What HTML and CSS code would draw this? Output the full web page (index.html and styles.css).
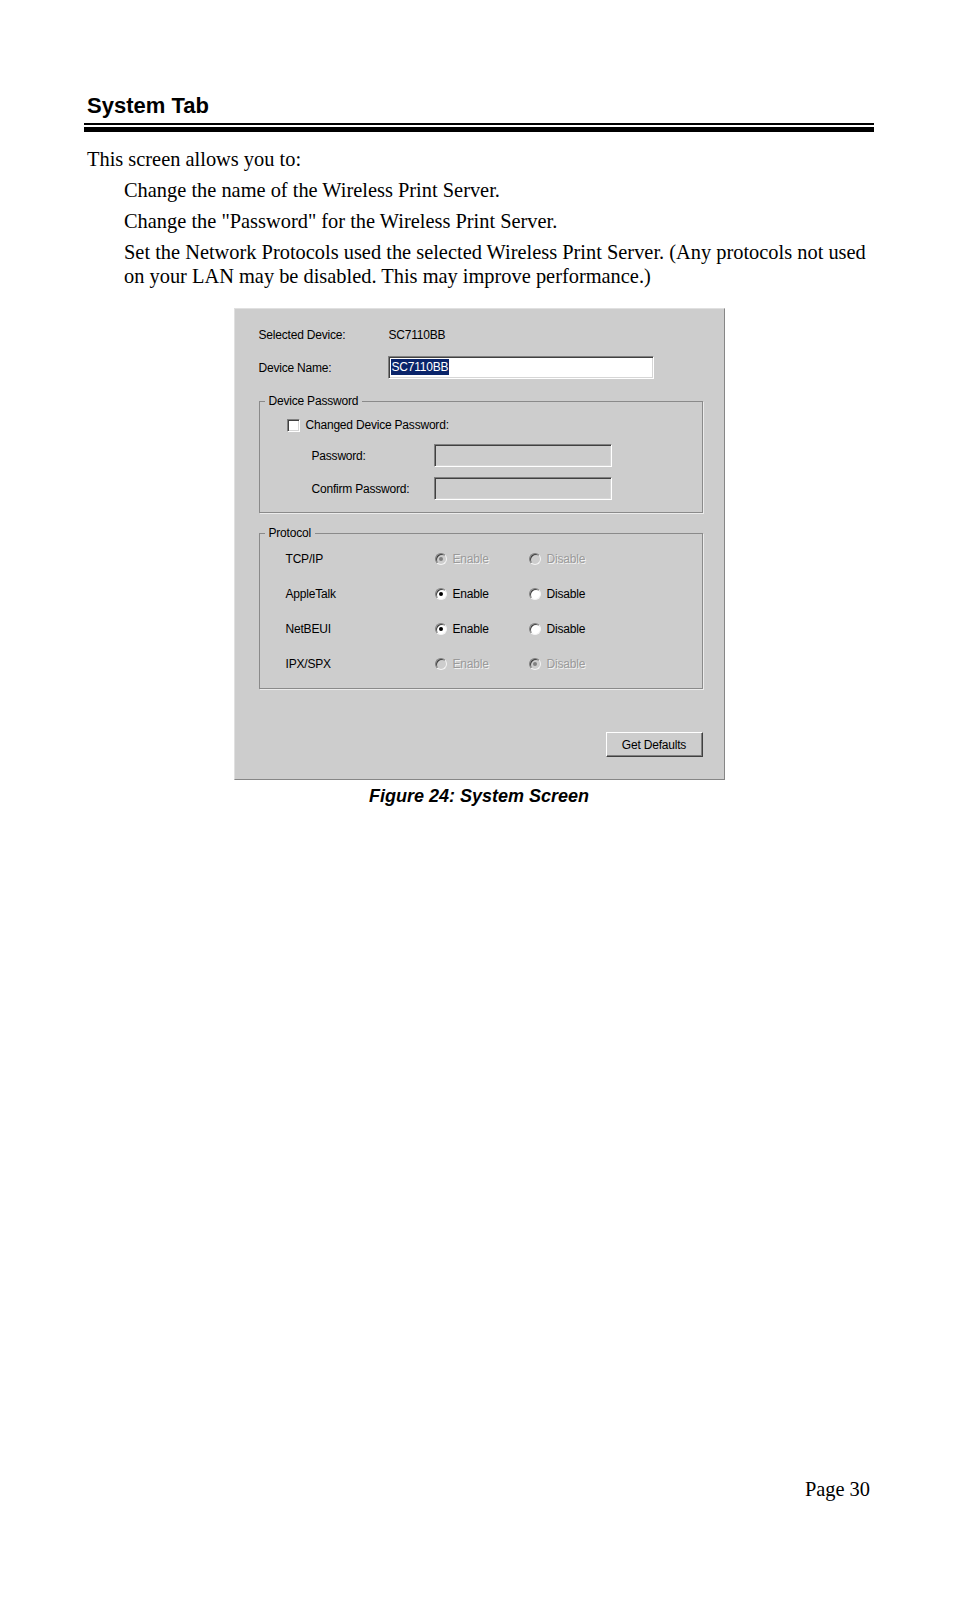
FILE: index.html
```html
<!DOCTYPE html>
<html lang="en">
<head>
<meta charset="utf-8">
<title>System Tab</title>
<link rel="stylesheet" href="styles.css">
</head>
<body>
<div class="page">
  <h1 class="title">System Tab</h1>
  <div class="rule"></div>
  <p class="intro">This screen allows you to:</p>
  <ul class="items">
    <li>Change the name of the Wireless Print Server.</li>
    <li>Change the "Password" for the Wireless Print Server.</li>
    <li>Set the Network Protocols used the selected Wireless Print Server. (Any protocols not used on your LAN may be disabled. This may improve performance.)</li>
  </ul>

  <div class="dialog">
    <div class="row r-selected"><span>Selected Device:</span><span>SC7110BB</span></div>
    <div class="row r-name"><span>Device Name:</span><div class="textbox"><span class="sel">SC7110BB</span></div></div>

    <fieldset class="group g-pass">
      <legend>Device Password</legend>
      <div class="check-row"><span class="checkbox"></span><span>Changed Device Password:</span></div>
      <div class="pw-row first"><span>Password:</span><div class="textbox disabled"></div></div>
      <div class="pw-row"><span>Confirm Password:</span><div class="textbox disabled"></div></div>
    </fieldset>

    <fieldset class="group g-proto">
      <legend>Protocol</legend>
      <div class="proto-row">
        <span>TCP/IP</span>
        <span class="opt off"><span class="radio on"></span>Enable</span>
        <span class="opt off"><span class="radio"></span>Disable</span>
      </div>
      <div class="proto-row">
        <span>AppleTalk</span>
        <span class="opt"><span class="radio on"></span>Enable</span>
        <span class="opt"><span class="radio"></span>Disable</span>
      </div>
      <div class="proto-row">
        <span>NetBEUI</span>
        <span class="opt"><span class="radio on"></span>Enable</span>
        <span class="opt"><span class="radio"></span>Disable</span>
      </div>
      <div class="proto-row">
        <span>IPX/SPX</span>
        <span class="opt off"><span class="radio"></span>Enable</span>
        <span class="opt off"><span class="radio on"></span>Disable</span>
      </div>
    </fieldset>

    <div class="actions"><button class="btn" type="button">Get Defaults</button></div>
  </div>

  <p class="caption">Figure 24: System Screen</p>
  <footer class="pagenum">Page 30</footer>
</div>
</body>
</html>
```

FILE: styles.css
```css
html, body {
  margin: 0;
  padding: 0;
  background: #fff;
}

body {
  font-family: "Liberation Serif", "Times New Roman", serif;
  color: #000;
}

.page {
  box-sizing: border-box;
  height: 1610px;
  padding: 93px 80px 0 84px;
  display: flex;
  flex-direction: column;
}

.title {
  margin: 0;
  padding-left: 3px;
  font: bold 22px/26px "Liberation Sans", Arial, sans-serif;
}

.rule {
  margin-top: 4px;
  height: 2px;
  border-top: 2px solid #000;
  border-bottom: 5px solid #000;
}

.intro {
  margin: 15px 0 0 3px;
  font-size: 20.4px;
  line-height: 24px;
}

.items {
  list-style: none;
  margin: 7px 0 0;
  padding: 0 0 0 40px;
  font-size: 20.4px;
  line-height: 24px;
}

.items li + li {
  margin-top: 7px;
}

/* ---------- dialog ---------- */
.dialog {
  box-sizing: border-box;
  width: 491px;
  height: 472px;
  margin: 20px auto 0;
  padding: 18px 21px 0 24px;
  background: #cdcdcd;
  border: 1px solid;
  border-color: #e0e0e0 #868686 #868686 #e0e0e0;
  font: 12px/14px "Liberation Sans", Arial, sans-serif;
  letter-spacing: -0.2px;
  color: #000;
}

.row {
  display: grid;
  grid-template-columns: 130px auto;
  align-items: center;
}

.r-selected {
  line-height: 16px;
}

.r-name {
  margin-top: 13px;
  grid-template-columns: 129px 266px;
}

.textbox {
  box-sizing: border-box;
  height: 23px;
  padding: 2px 0 0 1px;
  background: #fff;
  border: 1px solid;
  border-color: #808080 #fff #fff #808080;
  box-shadow: inset 1px 1px 0 #404040, inset -1px -1px 0 #d6d6d6;
}

.textbox.disabled {
  background: #cdcdcd;
}

.sel {
  display: inline-block;
  margin-left: 1px;
  padding: 0 1px;
  line-height: 16px;
  background: #0a246a;
  color: #fff;
}

.group {
  box-sizing: border-box;
  width: 444px;
  min-width: 0;
  margin: 15px 0 0;
  padding: 10px 0 12px 5px;
  border: 1px solid #8a8a8a;
  box-shadow: 1px 1px 0 #ececec;
}

.group legend {
  padding: 0 4px;
  line-height: 14px;
}

.check-row {
  display: flex;
  align-items: center;
  gap: 6px;
  margin-left: 22px;
  height: 14px;
}

.checkbox {
  box-sizing: border-box;
  width: 13px;
  height: 13px;
  background: #fff;
  border: 1px solid;
  border-color: #808080 #fff #fff #808080;
  box-shadow: inset 1px 1px 0 #404040, inset -1px -1px 0 #d6d6d6;
}

.pw-row {
  display: grid;
  grid-template-columns: 122px 178px;
  align-items: center;
  margin: 10px 0 0 47px;
}

.pw-row.first {
  margin-top: 12px;
}

.g-proto {
  margin-top: 13px;
  padding: 9px 0 14px 5px;
}

.proto-row {
  display: grid;
  grid-template-columns: 149px 94px auto;
  align-items: center;
  height: 20px;
  margin-left: 21px;
}

.proto-row + .proto-row {
  margin-top: 15px;
}

.opt {
  display: flex;
  align-items: center;
  gap: 6px;
}

.opt.off {
  color: #9a9a9a;
  text-shadow: 1px 1px 0 #f2f2f2;
}

.radio {
  box-sizing: border-box;
  width: 12px;
  height: 12px;
  border-radius: 50%;
  background: #fff;
  border: 1px solid;
  border-color: #808080 #f4f4f4 #f4f4f4 #808080;
  box-shadow: inset 1px 1px 0 #404040;
  display: grid;
  place-items: center;
}

.radio.on::after {
  content: "";
  width: 4px;
  height: 4px;
  border-radius: 50%;
  background: #000;
}

.opt.off .radio {
  background: #cdcdcd;
}

.opt.off .radio.on::after {
  background: #808080;
}

.actions {
  display: flex;
  justify-content: flex-end;
  margin-top: 43px;
}

.btn {
  box-sizing: border-box;
  width: 97px;
  height: 25px;
  padding: 0;
  font: inherit;
  letter-spacing: inherit;
  color: #000;
  background: #cdcdcd;
  border: 1px solid;
  border-color: #fff #404040 #404040 #fff;
  box-shadow: inset -1px -1px 0 #808080;
}

.caption {
  margin: 6px 0 0;
  text-align: center;
  font: italic bold 18px/20px "Liberation Sans", Arial, sans-serif;
}

.pagenum {
  margin-top: auto;
  margin-bottom: 109px;
  padding-right: 4px;
  text-align: right;
  font-size: 20.4px;
  line-height: 24px;
}
```
